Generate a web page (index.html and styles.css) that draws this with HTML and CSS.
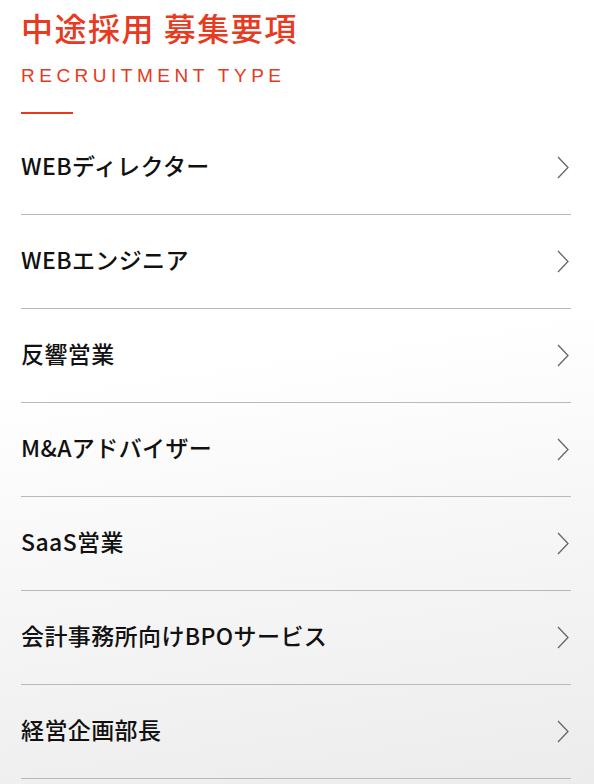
FILE: index.html
```html
<!DOCTYPE html>
<html lang="ja">
<head>
<meta charset="utf-8">
<title>中途採用 募集要項</title>
<link rel="stylesheet" href="styles.css">
</head>
<body>
<main class="page">
  <header class="head">
    <h1 class="title">中途採用 募集要項</h1>
    <p class="sub">RECRUITMENT TYPE</p>
    <span class="rule"></span>
  </header>
  <ul class="list">
    <li class="item"><a class="link" href="#"><span class="label">WEBディレクター</span><svg class="chev" width="12" height="23" viewBox="0 0 12 23"><path d="M1 1 L11 11.5 L1 22" fill="none" stroke="#666" stroke-width="1.3"/></svg></a></li>
    <li class="item"><a class="link" href="#"><span class="label">WEBエンジニア</span><svg class="chev" width="12" height="23" viewBox="0 0 12 23"><path d="M1 1 L11 11.5 L1 22" fill="none" stroke="#666" stroke-width="1.3"/></svg></a></li>
    <li class="item"><a class="link" href="#"><span class="label">反響営業</span><svg class="chev" width="12" height="23" viewBox="0 0 12 23"><path d="M1 1 L11 11.5 L1 22" fill="none" stroke="#666" stroke-width="1.3"/></svg></a></li>
    <li class="item"><a class="link" href="#"><span class="label">M&amp;Aアドバイザー</span><svg class="chev" width="12" height="23" viewBox="0 0 12 23"><path d="M1 1 L11 11.5 L1 22" fill="none" stroke="#666" stroke-width="1.3"/></svg></a></li>
    <li class="item"><a class="link" href="#"><span class="label">SaaS営業</span><svg class="chev" width="12" height="23" viewBox="0 0 12 23"><path d="M1 1 L11 11.5 L1 22" fill="none" stroke="#666" stroke-width="1.3"/></svg></a></li>
    <li class="item"><a class="link" href="#"><span class="label">会計事務所向けBPOサービス</span><svg class="chev" width="12" height="23" viewBox="0 0 12 23"><path d="M1 1 L11 11.5 L1 22" fill="none" stroke="#666" stroke-width="1.3"/></svg></a></li>
    <li class="item"><a class="link" href="#"><span class="label">経営企画部長</span><svg class="chev" width="12" height="23" viewBox="0 0 12 23"><path d="M1 1 L11 11.5 L1 22" fill="none" stroke="#666" stroke-width="1.3"/></svg></a></li>
  </ul>
</main>
</body>
</html>
```
FILE: styles.css
```css
html, body {
  margin: 0;
  padding: 0;
}
body {
  min-height: 784px;
  background: linear-gradient(172deg, #ffffff 0%, #ffffff 45%, #f6f6f6 70%, #ececec 100%);
  font-family: "Noto Sans CJK JP", "Noto Sans", sans-serif;
  color: #111;
}
.page {
  padding: 0 23px 0 21px;
}
.head {
  display: flex;
  flex-direction: column;
  align-items: flex-start;
  padding-top: 4px;
}
.title {
  margin: 0;
  font-size: 32px;
  line-height: 46px;
  font-weight: 500;
  letter-spacing: 1.5px;
  color: #e63a21;
}
.sub {
  margin: 15px 0 0;
  font-family: "Liberation Sans", "Roboto", sans-serif;
  font-size: 19px;
  line-height: 22px;
  letter-spacing: 4.5px;
  color: #e63a21;
  font-weight: 400;
}
.rule {
  display: block;
  width: 52px;
  height: 2px;
  background: #e8391f;
  margin-top: 25px;
}
.list {
  list-style: none;
  margin: 7px 0 0;
  padding: 0;
}
.item {
  border-bottom: 1px solid #b9b9b9;
}
.link {
  display: flex;
  align-items: center;
  justify-content: space-between;
  height: 93px;
  text-decoration: none;
  color: #111;
}
.label {
  font-size: 23px;
  font-weight: 500;
  line-height: 30px;
  letter-spacing: 0.4px;
  padding-bottom: 5px;
}
.chev {
  margin-right: 2px;
  display: block;
}
```
